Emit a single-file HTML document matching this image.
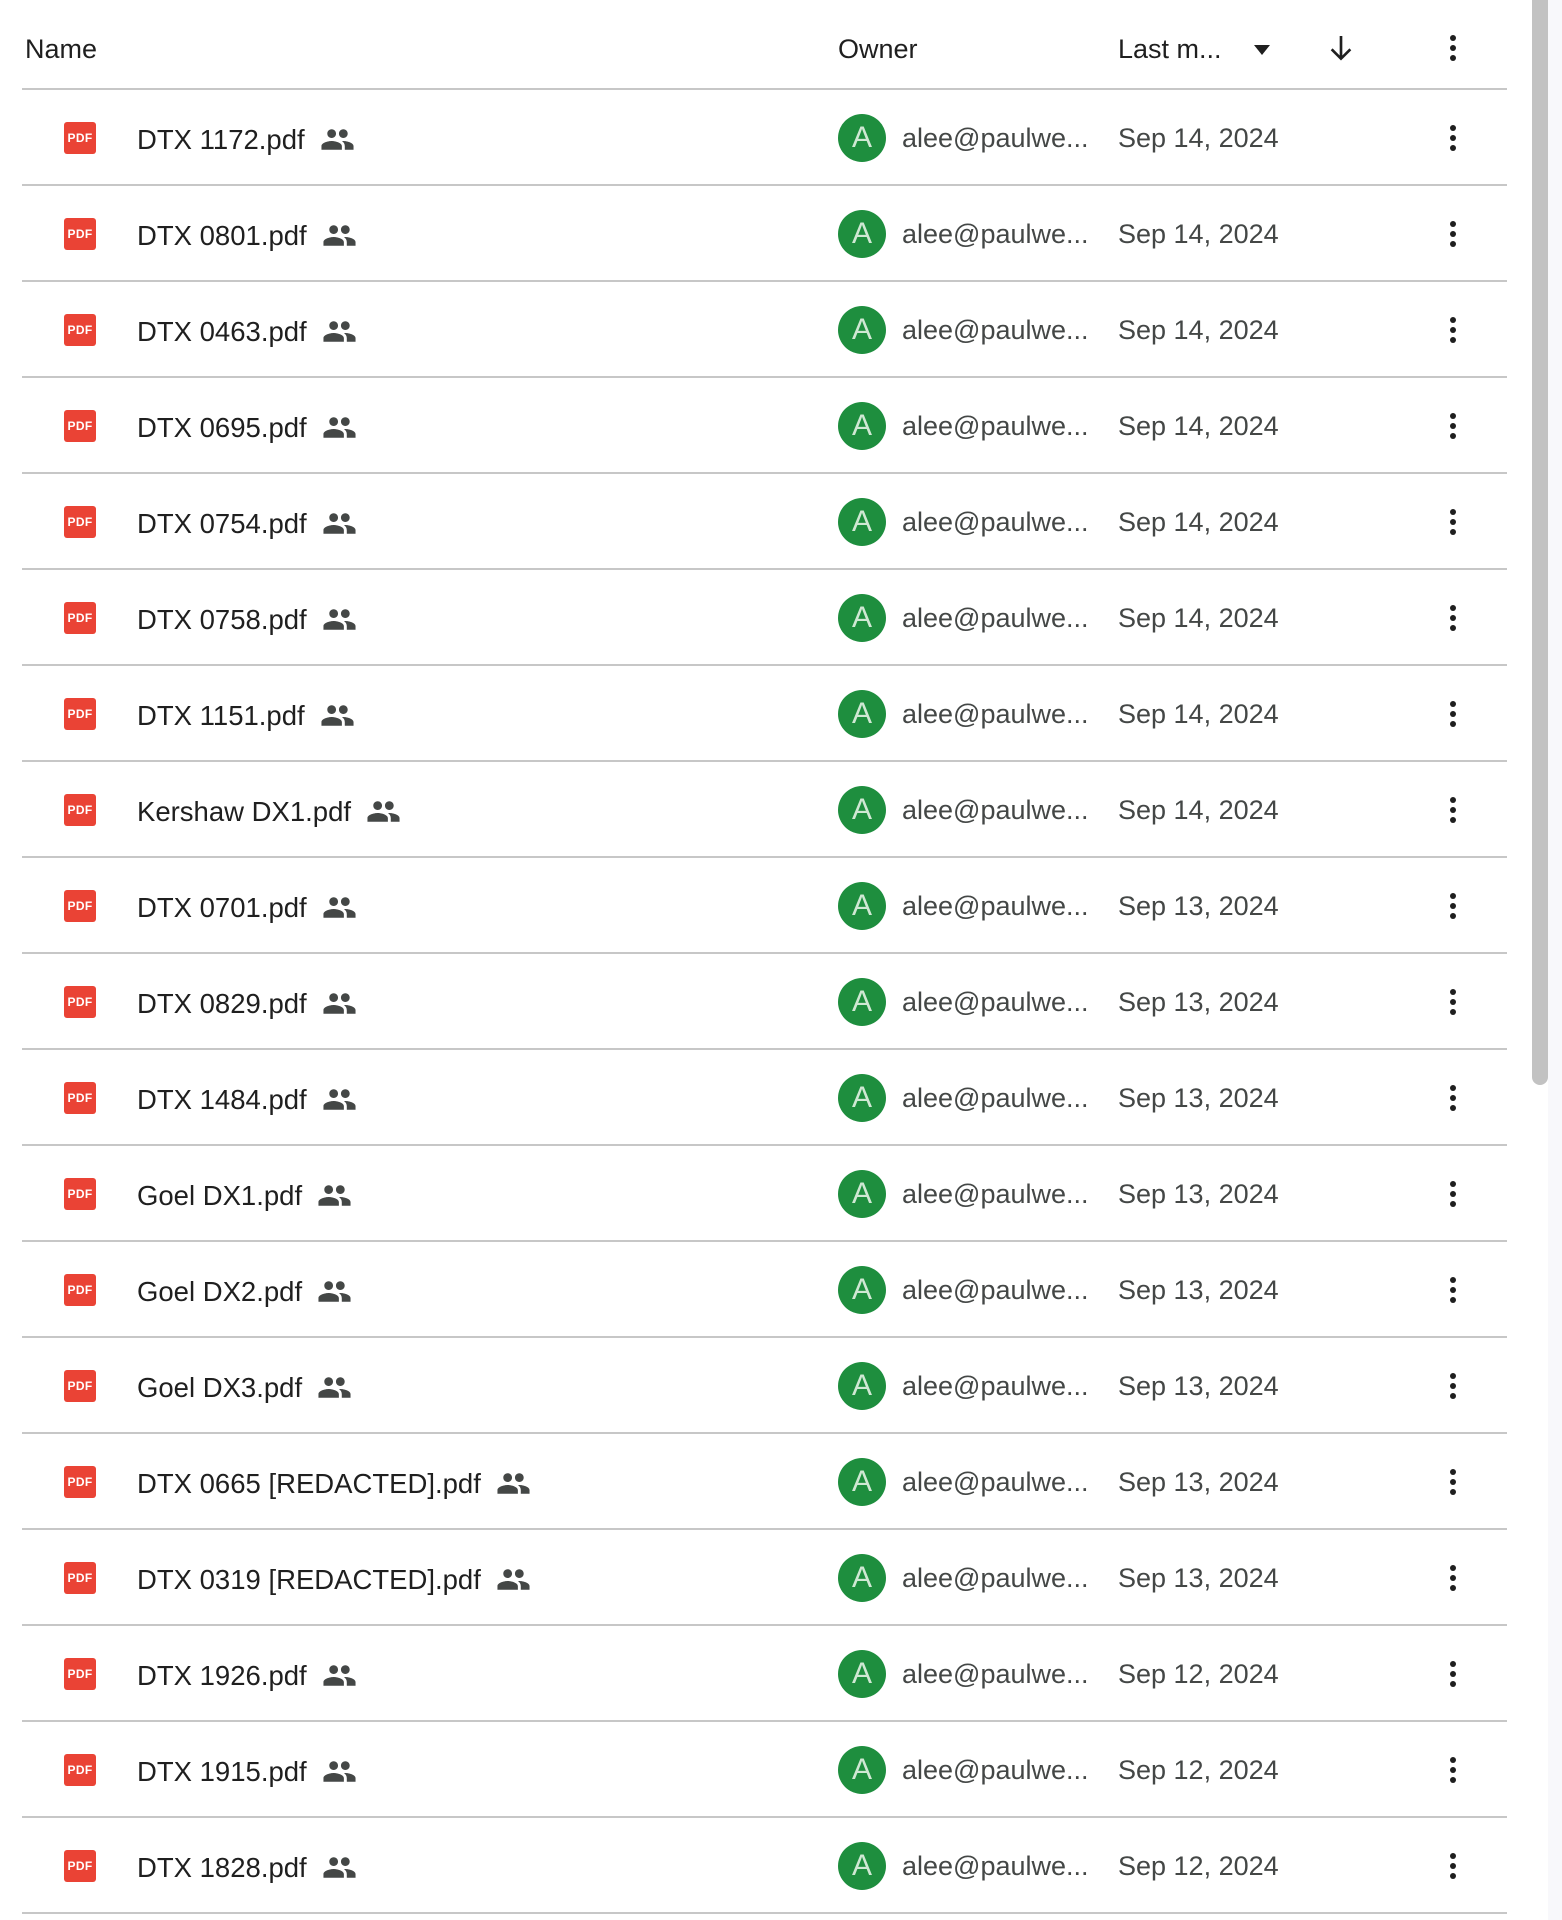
<!DOCTYPE html>
<html><head><style>
body{margin:0;width:1562px;height:1920px;background:#fff;position:relative;overflow:hidden;font-family:"Liberation Sans",sans-serif;color:#1f1f1f}
.strip{position:absolute;left:1548px;top:0;width:14px;height:1920px;background:#f8f8fb}
.thumb{position:absolute;left:1532px;top:0;width:16px;height:1085px;background:#c2c2c2;border-radius:0 0 8px 8px}
.hdr{position:absolute;left:0;top:0;width:1507px;height:88px}
.hdr span{position:absolute;top:33px;font-size:27px;line-height:32px}
.line{position:absolute;left:22px;width:1485px;height:2px;background:#c7c7c7}
.row{position:absolute;left:0;width:1507px;height:96px}
.pdf{position:absolute;left:64px;top:32px;width:32px;height:32px;background:#ea4335;border-radius:3px;color:#fff;font-size:12px;font-weight:bold;text-align:center;line-height:32px;letter-spacing:0.3px}
.nm{position:absolute;left:137px;top:32px;font-size:27.5px;line-height:32px;white-space:nowrap;display:flex;align-items:center}
.nm svg{margin-left:15px}
.av{position:absolute;left:838px;top:24px;width:48px;height:48px;border-radius:50%;background:#1e8e3e;color:#cfe8d3;font-size:30px;text-align:center;line-height:48px}
.em{position:absolute;left:902px;top:32px;font-size:27px;line-height:32px;color:#444746}
.dt{position:absolute;left:1118px;top:32px;font-size:27px;line-height:32px;color:#444746}
.kb{position:absolute;left:1441px;top:30px}
</style></head><body>
<div class="strip"></div><div class="thumb"></div>
<div class="hdr">
<span style="left:25px">Name</span>
<span style="left:838px">Owner</span>
<span style="left:1118px">Last m...</span>
<svg style="position:absolute;left:1250px;top:38px" width="24" height="24" viewBox="0 0 24 24"><path d="M4 7h16l-8 10z" fill="#1f1f1f"/></svg>
<svg style="position:absolute;left:1325px;top:32px" width="32" height="32" viewBox="0 0 24 24"><path d="M12 3v17M5 13l7 7 7-7" stroke="#1f1f1f" stroke-width="2" fill="none"/></svg>
<svg style="position:absolute;left:1441px;top:32px" width="24" height="32" viewBox="0 0 24 32"><circle cx="12" cy="6" r="3" fill="#1f1f1f"/><circle cx="12" cy="16" r="3" fill="#1f1f1f"/><circle cx="12" cy="26" r="3" fill="#1f1f1f"/></svg>
</div>
<div class="line" style="top:88px"></div>
<div id="rows"></div>
<script>
var d=[["DTX 1172.pdf","14"],["DTX 0801.pdf","14"],["DTX 0463.pdf","14"],["DTX 0695.pdf","14"],["DTX 0754.pdf","14"],["DTX 0758.pdf","14"],["DTX 1151.pdf","14"],["Kershaw DX1.pdf","14"],["DTX 0701.pdf","13"],["DTX 0829.pdf","13"],["DTX 1484.pdf","13"],["Goel DX1.pdf","13"],["Goel DX2.pdf","13"],["Goel DX3.pdf","13"],["DTX 0665 [REDACTED].pdf","13"],["DTX 0319 [REDACTED].pdf","13"],["DTX 1926.pdf","12"],["DTX 1915.pdf","12"],["DTX 1828.pdf","12"]];
var ppl='<svg width="35" height="35" viewBox="0 0 24 24"><path fill="#444746" d="M16 11c1.66 0 2.99-1.34 2.99-3S17.66 5 16 5c-1.66 0-3 1.34-3 3s1.34 3 3 3zm-8 0c1.66 0 2.99-1.34 2.99-3S9.66 5 8 5C6.34 5 5 6.34 5 8s1.34 3 3 3zm0 2c-2.33 0-7 1.17-7 3.5V19h14v-2.5c0-2.33-4.67-3.5-7-3.5zm8 0c-.29 0-.62.02-.97.05 1.16.84 1.97 1.97 1.97 3.45V19h6v-2.5c0-2.33-4.67-3.5-7-3.5z"/></svg>';
var kb='<svg class="kb" width="24" height="36" viewBox="0 0 24 36"><circle cx="12" cy="8" r="3" fill="#1f1f1f"/><circle cx="12" cy="18" r="3" fill="#1f1f1f"/><circle cx="12" cy="28" r="3" fill="#1f1f1f"/></svg>';
var h='';
for(var i=0;i<d.length;i++){var t=90+i*96;
h+='<div class="row" style="top:'+t+'px"><div class="pdf">PDF</div><div class="nm">'+d[i][0]+ppl+'</div><div class="av">A</div><div class="em">alee@paulwe...</div><div class="dt">Sep '+d[i][1]+', 2024</div>'+kb+'</div>';
h+='<div class="line" style="top:'+(88+96*(i+1))+'px"></div>';}
document.getElementById('rows').innerHTML=h;
</script>
</body></html>
